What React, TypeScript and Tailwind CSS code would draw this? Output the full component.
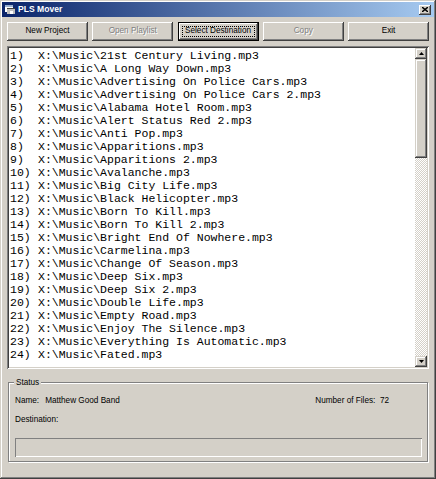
import React from "react";

const items = [
  "X:\\Music\\21st Century Living.mp3",
  "X:\\Music\\A Long Way Down.mp3",
  "X:\\Music\\Advertising On Police Cars.mp3",
  "X:\\Music\\Advertising On Police Cars 2.mp3",
  "X:\\Music\\Alabama Hotel Room.mp3",
  "X:\\Music\\Alert Status Red 2.mp3",
  "X:\\Music\\Anti Pop.mp3",
  "X:\\Music\\Apparitions.mp3",
  "X:\\Music\\Apparitions 2.mp3",
  "X:\\Music\\Avalanche.mp3",
  "X:\\Music\\Big City Life.mp3",
  "X:\\Music\\Black Helicopter.mp3",
  "X:\\Music\\Born To Kill.mp3",
  "X:\\Music\\Born To Kill 2.mp3",
  "X:\\Music\\Bright End Of Nowhere.mp3",
  "X:\\Music\\Carmelina.mp3",
  "X:\\Music\\Change Of Season.mp3",
  "X:\\Music\\Deep Six.mp3",
  "X:\\Music\\Deep Six 2.mp3",
  "X:\\Music\\Double Life.mp3",
  "X:\\Music\\Empty Road.mp3",
  "X:\\Music\\Enjoy The Silence.mp3",
  "X:\\Music\\Everything Is Automatic.mp3",
  "X:\\Music\\Fated.mp3",
];

function Btn({ label, disabled, def }: { label: string; disabled?: boolean; def?: boolean }) {
  if (def) {
    return (
      <div className="w-[81px] h-[19px] border border-black bg-[#d4d0c8] shadow-[inset_-1px_-1px_#404040,inset_1px_1px_#ffffff,inset_-2px_-2px_#808080,inset_2px_2px_#d4d0c8] p-[3px]">
        <div className="w-full h-full border border-dotted border-black flex items-center justify-center text-[8.2px] text-black leading-none">
          {label}
        </div>
      </div>
    );
  }
  return (
    <div
      className={
        disabled
          ? "w-[81px] h-[19px] bg-[#d4d0c8] shadow-[inset_-1px_-1px_#404040,inset_1px_1px_#ffffff,inset_-2px_-2px_#808080,inset_2px_2px_#d4d0c8] flex items-center justify-center text-[8.2px] text-[#808080] [text-shadow:1px_1px_#ffffff] leading-none"
          : "w-[81px] h-[19px] bg-[#d4d0c8] shadow-[inset_-1px_-1px_#404040,inset_1px_1px_#ffffff,inset_-2px_-2px_#808080,inset_2px_2px_#d4d0c8] flex items-center justify-center text-[8.2px] text-black leading-none"
      }
    >
      {label}
    </div>
  );
}

function ScrollBtn({ up }: { up?: boolean }) {
  return (
    <div className="w-[12px] h-[11px] bg-[#d4d0c8] shadow-[inset_-1px_-1px_#404040,inset_1px_1px_#d4d0c8,inset_-2px_-2px_#808080,inset_2px_2px_#ffffff] flex items-center justify-center">
      <svg width="5" height="3" viewBox="0 0 5 3">
        {up ? <polygon points="2.5,0 5,3 0,3" fill="#000" /> : <polygon points="0,0 5,0 2.5,3" fill="#000" />}
      </svg>
    </div>
  );
}

export default function App() {
  return (
    <div className="w-[436px] h-[479px] bg-[#d4d0c8] shadow-[inset_-1px_-1px_#404040,inset_1px_1px_#d4d0c8,inset_-2px_-2px_#808080,inset_2px_2px_#ffffff] p-[2px] flex flex-col font-['Liberation_Sans',Arial,sans-serif] overflow-hidden">
      {/* Title bar */}
      <div className="h-[15px] bg-[linear-gradient(to_right,#0a246a,#a6caf0)] flex items-center pl-[3px] pr-[3px]">
        <svg width="10" height="9" viewBox="0 0 10 9" className="mr-[3px]">
          <rect x="0" y="0" width="8" height="7" fill="#ffffff" />
          <rect x="0" y="0" width="8" height="2" fill="#9ab0d0" />
          <rect x="2" y="3" width="8" height="6" fill="#c0c0c0" />
          <rect x="2" y="3" width="8" height="1" fill="#404040" />
          <rect x="5" y="6" width="3" height="3" fill="#ffffff" />
        </svg>
        <span className="text-white font-bold text-[8.6px] leading-none">PLS Mover</span>
        <div className="ml-auto w-[12px] h-[10px] bg-[#d4d0c8] shadow-[inset_-1px_-1px_#404040,inset_1px_1px_#ffffff,inset_-2px_-2px_#808080] flex items-center justify-center">
          <svg width="6" height="5" viewBox="0 0 6 5">
            <path d="M0 0 L6 5 M6 0 L0 5" stroke="#000" strokeWidth="1.4" />
          </svg>
        </div>
      </div>

      {/* Buttons */}
      <div className="mt-[5px] px-[5px] flex justify-between">
        <Btn label="New Project" />
        <Btn label="Open Playlist" disabled />
        <Btn label="Select Destination" def />
        <Btn label="Copy" disabled />
        <Btn label="Exit" />
      </div>

      {/* List box */}
      <div className="mt-[5px] ml-[5px] w-[422px] h-[323px] bg-white shadow-[inset_1px_1px_#808080,inset_-1px_-1px_#ffffff,inset_2px_2px_#404040,inset_-2px_-2px_#d4d0c8] p-[2px] flex">
        <div className="flex-1 pt-[1px] pl-[1px] font-['Liberation_Mono','Courier_New',monospace] text-[11.5px] leading-[13px] text-black overflow-hidden">
          {items.map((p, i) => (
            <div key={i} className="flex whitespace-pre h-[13px]">
              <span className="w-[28px] shrink-0">{i + 1})</span>
              <span>{p}</span>
            </div>
          ))}
        </div>
        <div className="w-[12px] flex flex-col">
          <ScrollBtn up />
          <div className="h-[99px] bg-[#d4d0c8] shadow-[inset_-1px_-1px_#404040,inset_1px_1px_#d4d0c8,inset_-2px_-2px_#808080,inset_2px_2px_#ffffff]" />
          <div className="flex-1 bg-[conic-gradient(#ffffff_25%,#d4d0c8_0_50%,#ffffff_0_75%,#d4d0c8_0)] bg-[length:2px_2px]" />
          <ScrollBtn />
        </div>
      </div>

      {/* Status group */}
      <div className="relative mt-[13px] ml-[6px] w-[420px] h-[80px] border border-[#808080] shadow-[inset_1px_1px_#ffffff,1px_1px_#ffffff] text-[8.2px] text-black">
        <span className="absolute -top-[6px] left-[5px] bg-[#d4d0c8] px-[2px] leading-[11px]">Status</span>
        <div className="flex flex-col pl-[6px] pr-[5px] pt-[12px]">
          <div className="flex h-[12px] items-center">
            <span>Name:</span>
            <span className="ml-[6px]">Matthew Good Band</span>
            <span className="ml-auto mr-[33px]">Number of Files:&nbsp;&nbsp;72</span>
          </div>
          <div className="flex h-[12px] items-center mt-[7px]">
            <span>Destination:</span>
          </div>
          <div className="mt-[12px] h-[19px] bg-[#d4d0c8] shadow-[inset_1px_1px_#808080,inset_-1px_-1px_#ffffff]" />
        </div>
      </div>
    </div>
  );
}
